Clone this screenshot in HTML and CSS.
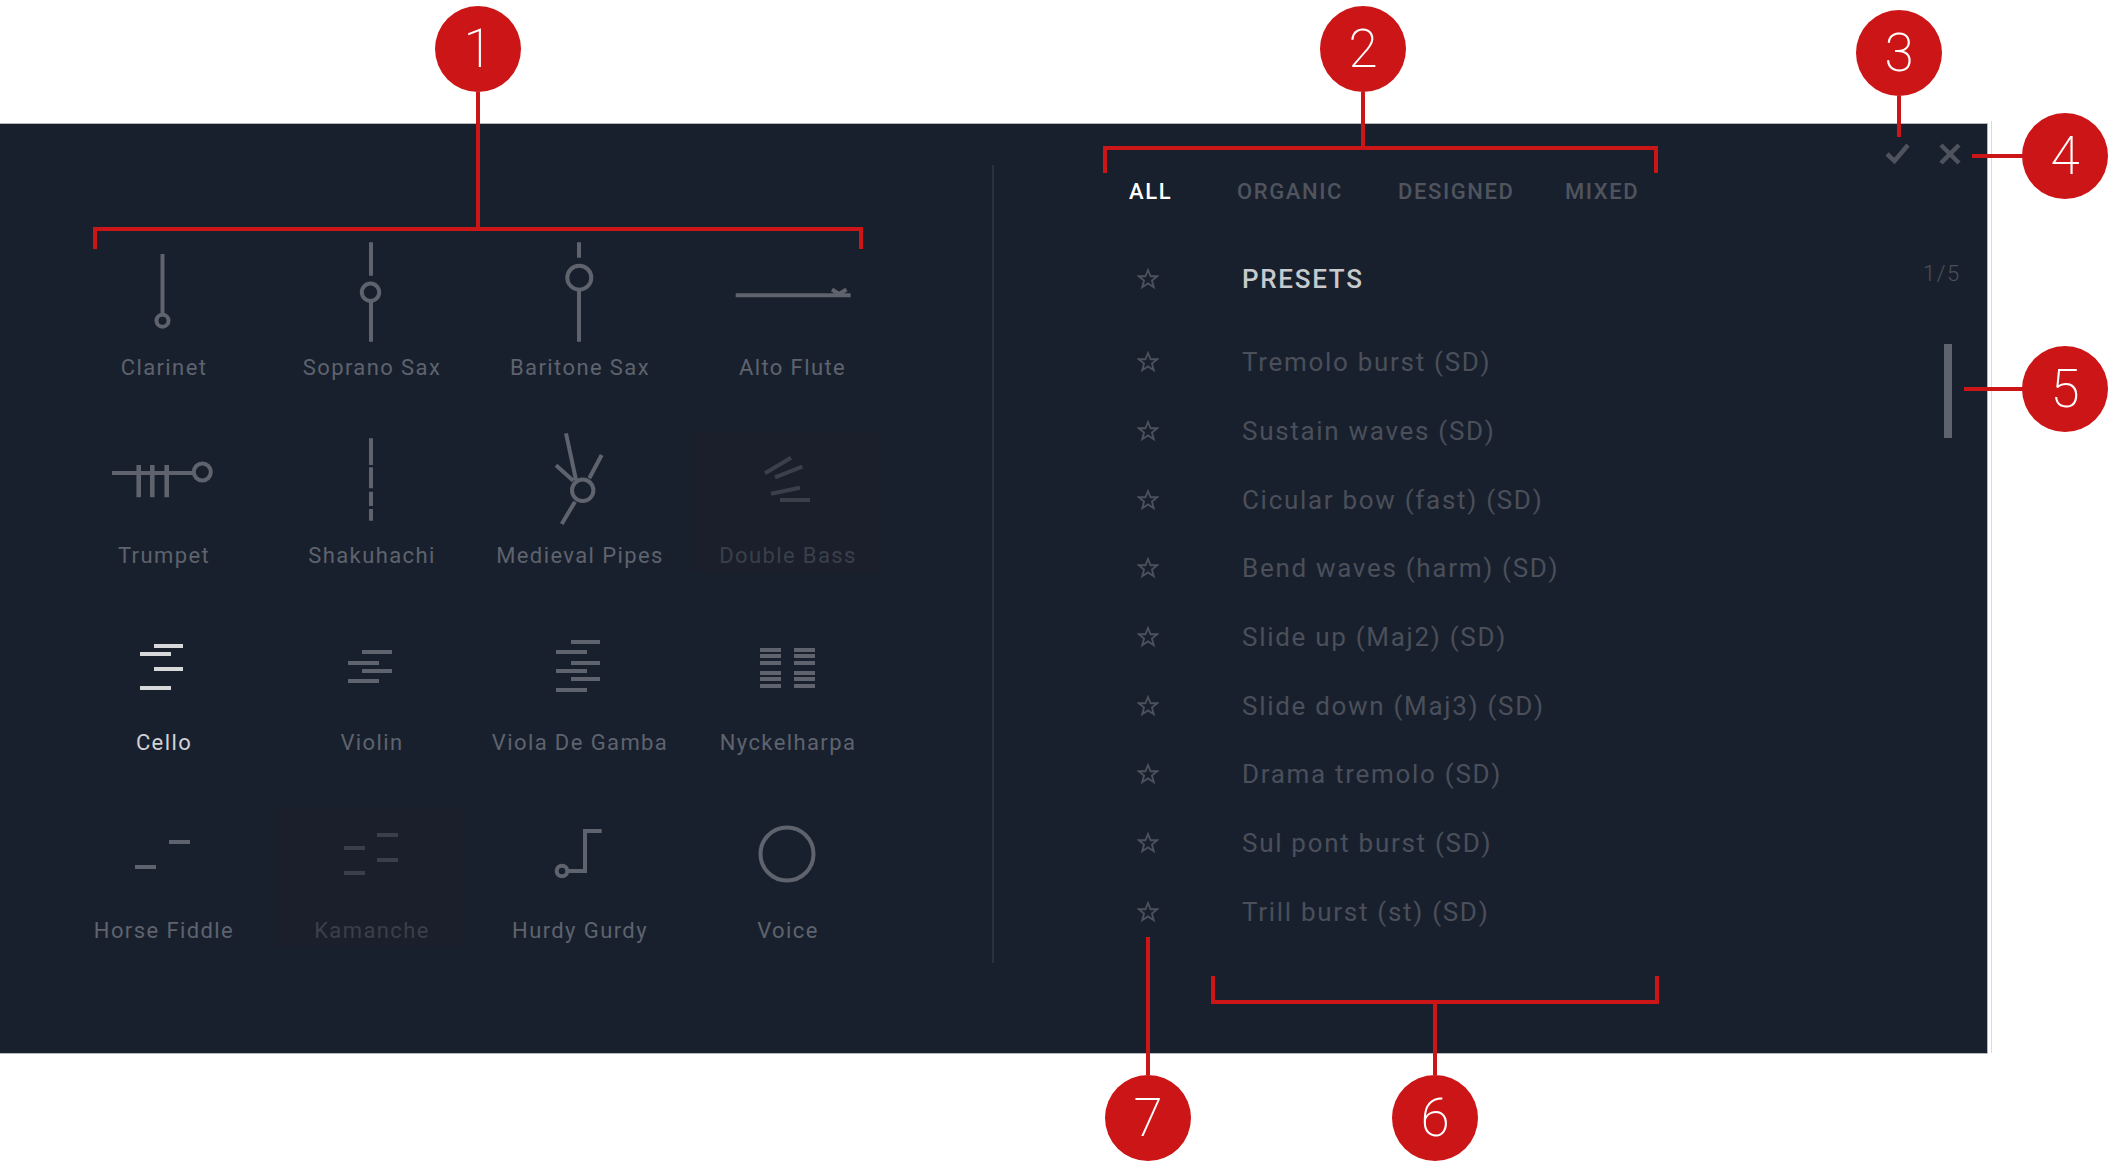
FILE: index.html
```html
<!DOCTYPE html>
<html lang="en">
<head>
<meta charset="utf-8">
<title>Instrument and preset browser</title>
<link rel="stylesheet" href="styles.css">
</head>
<body>
<main class="panel">
  <section class="instruments">
    <div class="cell">
      <svg class="icon" viewBox="0 0 208 120"><path d="M103.5 24V85"/><circle cx="103.5" cy="90.7" r="6"/></svg>
      <span class="label">Clarinet</span>
    </div>
    <div class="cell">
      <svg class="icon" viewBox="0 0 208 120"><path d="M104 12.3V45.7M104 72V111.7"/><circle cx="103.5" cy="62.3" r="8.7"/></svg>
      <span class="label">Soprano Sax</span>
    </div>
    <div class="cell">
      <svg class="icon" viewBox="0 0 208 120"><path d="M104 12.3V27.7M104 60V111.7"/><circle cx="104.3" cy="47.7" r="12"/></svg>
      <span class="label">Baritone Sax</span>
    </div>
    <div class="cell">
      <svg class="icon" viewBox="0 0 208 120"><path d="M52.7 65.3H167.7"/><path class="fine" d="M149 59.5L156 64L163.5 59.5"/></svg>
      <span class="label label-shift">Alto Flute</span>
    </div>

    <div class="cell">
      <svg class="icon" viewBox="0 0 208 120"><path d="M53 55H134"/><path class="thick" d="M79.7 47V79.3M93.3 47V79.3M107.7 47V79.3"/><circle cx="143.3" cy="54" r="8.5"/></svg>
      <span class="label">Trumpet</span>
    </div>
    <div class="cell">
      <svg class="icon" viewBox="0 0 208 120"><path d="M104 20.3V47M104 49.3V70.3M104 73.7V88M104 91V102.7"/></svg>
      <span class="label">Shakuhachi</span>
    </div>
    <div class="cell">
      <svg class="icon" viewBox="0 0 208 120"><path d="M91 15.3L101 62M81 47.3L98.3 62.7M126.7 37L114.3 60.3M100 83.7L86.7 106"/><circle cx="107.7" cy="72.3" r="10.7"/></svg>
      <span class="label">Medieval Pipes</span>
    </div>
    <div class="cell cell-off">
      <svg class="icon" viewBox="0 0 208 120"><path d="M82 55.3L108 39.7M92 59.3L119.3 48.7M88 75.7L117 69.7M97 82H127"/></svg>
      <span class="label">Double Bass</span>
    </div>

    <div class="cell cell-on">
      <svg class="icon" viewBox="0 0 208 120"><path d="M95 41H124M81 49H112M95 64H124M81 83H112"/></svg>
      <span class="label">Cello</span>
    </div>
    <div class="cell">
      <svg class="icon" viewBox="0 0 208 120"><path d="M95 47H125M81 58H112M95 66H125M81 76H112"/></svg>
      <span class="label">Violin</span>
    </div>
    <div class="cell">
      <svg class="icon" viewBox="0 0 208 120"><path d="M96 37H125M81 47H112M96 58H125M81 66H112M96 74H125M81 85H112"/></svg>
      <span class="label">Viola De Gamba</span>
    </div>
    <div class="cell">
      <svg class="icon" viewBox="0 0 208 120"><path d="M77 45H98M77 51H98M77 58H98M77 68H98M77 74H98M77 81H98M111 45H132M111 51H132M111 58H132M111 68H132M111 74H132M111 81H132"/></svg>
      <span class="label">Nyckelharpa</span>
    </div>

    <div class="cell">
      <svg class="icon" viewBox="0 0 208 120"><path d="M110 49H131M76 74H97"/></svg>
      <span class="label">Horse Fiddle</span>
    </div>
    <div class="cell cell-off">
      <svg class="icon" viewBox="0 0 208 120"><path d="M110 42H131M77 55H98M110 67H131M77 80H98"/></svg>
      <span class="label">Kamanche</span>
    </div>
    <div class="cell">
      <svg class="icon" viewBox="0 0 208 120"><path d="M92 78H110V38H126.7"/><circle cx="87" cy="78" r="5.3"/></svg>
      <span class="label">Hurdy Gurdy</span>
    </div>
    <div class="cell">
      <svg class="icon" viewBox="0 0 208 120"><circle cx="104" cy="61" r="26.5"/></svg>
      <span class="label">Voice</span>
    </div>
  </section>

  <div class="divider"></div>

  <section class="browser">
    <nav class="tabs">
      <span class="tab tab-on">ALL</span>
      <span class="tab">ORGANIC</span>
      <span class="tab">DESIGNED</span>
      <span class="tab">MIXED</span>
    </nav>
    <div class="row row-head">
      <svg class="star" viewBox="0 0 24 24"><path d="M12 2.2L14.8 9H22L16.3 13.6L18.3 21L12 16.8L5.7 21L7.7 13.6L2 9H9.2Z"/></svg>
      <span class="head-title">PRESETS</span>
      <span class="pager">1/5</span>
    </div>
    <ul class="list">
      <li class="row"><svg class="star" viewBox="0 0 24 24"><path d="M12 2.2L14.8 9H22L16.3 13.6L18.3 21L12 16.8L5.7 21L7.7 13.6L2 9H9.2Z"/></svg><span class="preset">Tremolo burst (SD)</span></li>
      <li class="row"><svg class="star" viewBox="0 0 24 24"><path d="M12 2.2L14.8 9H22L16.3 13.6L18.3 21L12 16.8L5.7 21L7.7 13.6L2 9H9.2Z"/></svg><span class="preset">Sustain waves (SD)</span></li>
      <li class="row"><svg class="star" viewBox="0 0 24 24"><path d="M12 2.2L14.8 9H22L16.3 13.6L18.3 21L12 16.8L5.7 21L7.7 13.6L2 9H9.2Z"/></svg><span class="preset">Cicular bow (fast) (SD)</span></li>
      <li class="row"><svg class="star" viewBox="0 0 24 24"><path d="M12 2.2L14.8 9H22L16.3 13.6L18.3 21L12 16.8L5.7 21L7.7 13.6L2 9H9.2Z"/></svg><span class="preset">Bend waves (harm) (SD)</span></li>
      <li class="row"><svg class="star" viewBox="0 0 24 24"><path d="M12 2.2L14.8 9H22L16.3 13.6L18.3 21L12 16.8L5.7 21L7.7 13.6L2 9H9.2Z"/></svg><span class="preset">Slide up (Maj2) (SD)</span></li>
      <li class="row"><svg class="star" viewBox="0 0 24 24"><path d="M12 2.2L14.8 9H22L16.3 13.6L18.3 21L12 16.8L5.7 21L7.7 13.6L2 9H9.2Z"/></svg><span class="preset">Slide down (Maj3) (SD)</span></li>
      <li class="row"><svg class="star" viewBox="0 0 24 24"><path d="M12 2.2L14.8 9H22L16.3 13.6L18.3 21L12 16.8L5.7 21L7.7 13.6L2 9H9.2Z"/></svg><span class="preset">Drama tremolo (SD)</span></li>
      <li class="row"><svg class="star" viewBox="0 0 24 24"><path d="M12 2.2L14.8 9H22L16.3 13.6L18.3 21L12 16.8L5.7 21L7.7 13.6L2 9H9.2Z"/></svg><span class="preset">Sul pont burst (SD)</span></li>
      <li class="row"><svg class="star" viewBox="0 0 24 24"><path d="M12 2.2L14.8 9H22L16.3 13.6L18.3 21L12 16.8L5.7 21L7.7 13.6L2 9H9.2Z"/></svg><span class="preset">Trill burst (st) (SD)</span></li>
    </ul>
    <div class="scrollbar"></div>
    <svg class="action action-ok" viewBox="0 0 28 24"><path d="M3 12L10.5 19L24 3"/></svg>
    <svg class="action action-close" viewBox="0 0 24 24"><path d="M3 3L21 21M21 3L3 21"/></svg>
  </section>
</main>
<div class="edge"></div>

<aside class="notes">
  <div class="badge b1">1</div><div class="lead l1"></div><div class="bracket br1"></div>
  <div class="badge b2">2</div><div class="lead l2"></div><div class="bracket br2"></div>
  <div class="badge b3">3</div><div class="lead l3"></div>
  <div class="badge b4">4</div><div class="lead l4"></div>
  <div class="badge b5">5</div><div class="lead l5"></div>
  <div class="badge b6">6</div><div class="lead l6"></div><div class="bracket br6"></div>
  <div class="badge b7">7</div><div class="lead l7"></div>
</aside>
</body>
</html>
```
FILE: styles.css
```css
* { box-sizing: border-box; }
html, body { margin: 0; padding: 0; background: #fff; }
body {
  position: relative;
  width: 2116px;
  height: 1165px;
  overflow: hidden;
  font-family: Roboto, "Liberation Sans", sans-serif;
  padding-top: 123px;
}

.panel {
  display: flex;
  width: 1988px;
  height: 931px;
  background: #19202d;
  border: solid #b4b7bd;
  border-width: 1px 1px 1px 0;
}

.instruments {
  display: grid;
  grid-template-columns: repeat(4, 208px);
  grid-template-rows: 188px 187px 188px 187px;
  width: 992px;
  padding: 106px 0 0 59px;
  align-content: start;
}
.cell { position: relative; display: flex; flex-direction: column; align-items: center; }
.cell-off::before {
  content: "";
  position: absolute;
  left: 9px;
  top: 15px;
  width: 187px;
  height: 140px;
  background: #1a1f2b;
}
.icon {
  position: relative;
  display: block;
  width: 208px;
  height: 120px;
  fill: none;
  stroke: #5e636d;
  stroke-width: 4;
}
.icon .thick { stroke-width: 4.6; }
.icon .fine { stroke-width: 4; }
.label {
  position: relative;
  display: block;
  height: 36px;
  margin-left: 2px;
  line-height: 36px;
  font-size: 22px;
  letter-spacing: 1.4px;
  color: #5e636d;
  white-space: nowrap;
}
.label-shift { margin-left: 11px; }
.cell-on .icon { stroke: #d6d8da; }
.cell-on .label { color: #d0d2d5; }
.cell-off .icon { stroke: #3a3f4a; }
.cell-off .label { color: #3a3f4a; }

.divider {
  width: 2px;
  height: 798px;
  margin-top: 41px;
  background: #2a303c;
}

.browser {
  position: relative;
  flex: 1;
}
.tabs {
  display: grid;
  grid-template-columns: 108px 161px 167px auto;
  justify-content: start;
  padding: 53px 0 0 135px;
  height: 86px;
  line-height: 30px;
}
.tab {
  font-size: 22px;
  font-weight: 500;
  letter-spacing: 1.6px;
  color: #4f545e;
}
.tab-on { color: #fff; }

.row {
  display: flex;
  align-items: center;
  height: 68.7px;
  padding-left: 143px;
}
.row-head {
  height: 68px;
  margin-top: 35px;
  margin-bottom: 15px;
}
.list { list-style: none; margin: 0; padding: 0; }
.star {
  flex: none;
  width: 22px;
  height: 22px;
  fill: none;
  stroke: #4c515c;
  stroke-width: 2;
  stroke-linejoin: miter;
}
.head-title {
  margin-left: 83px;
  font-size: 26px;
  font-weight: 500;
  letter-spacing: 1.7px;
  color: #c7cacd;
}
.pager {
  position: absolute;
  left: 929px;
  top: 136px;
  font-size: 22px;
  font-weight: 300;
  letter-spacing: 1.5px;
  line-height: 28px;
  color: #4a4f5a;
}
.preset {
  margin-left: 83px;
  font-size: 26px;
  letter-spacing: 1.7px;
  color: #4a4f5a;
  white-space: nowrap;
}
.scrollbar {
  position: absolute;
  left: 950px;
  top: 220px;
  width: 8px;
  height: 94px;
  background: #5e636d;
}
.action {
  position: absolute;
  fill: none;
  stroke: #4e535d;
  stroke-width: 4.5;
}
.action-ok { left: 890px; top: 18px; width: 28px; height: 24px; }
.action-close { left: 944px; top: 18px; width: 24px; height: 24px; }

.edge {
  position: absolute;
  left: 1991px;
  top: 121px;
  width: 1px;
  height: 932px;
  background: #dcdcdc;
}

/* annotation callouts */
.badge {
  position: absolute;
  width: 86px;
  height: 86px;
  border-radius: 50%;
  background: #cc1517;
  color: #fff;
  font-size: 53px;
  font-weight: 200;
  line-height: 86px;
  text-align: center;
}
.lead, .bracket { position: absolute; }
.lead { background: #cc1517; }
.bracket { border: 0 solid #cc1517; }

.b1 { left: 435px; top: 6px; }
.l1 { left: 476px; top: 92px; width: 4px; height: 135px; }
.br1 { left: 93px; top: 227px; width: 770px; height: 22px; border-width: 4px 4px 0 4px; }

.b2 { left: 1320px; top: 6px; }
.l2 { left: 1361px; top: 92px; width: 4px; height: 54px; }
.br2 { left: 1103px; top: 146px; width: 555px; height: 27px; border-width: 4px 4px 0 4px; }

.b3 { left: 1856px; top: 10px; }
.l3 { left: 1897px; top: 96px; width: 4px; height: 41px; }

.b4 { left: 2022px; top: 113px; }
.l4 { left: 1972px; top: 154px; width: 51px; height: 4px; }

.b5 { left: 2022px; top: 346px; }
.l5 { left: 1964px; top: 387px; width: 59px; height: 4px; }

.b6 { left: 1392px; top: 1075px; }
.l6 { left: 1433px; top: 1004px; width: 4px; height: 71px; }
.br6 { left: 1211px; top: 976px; width: 448px; height: 28px; border-width: 0 4px 4px 4px; }

.b7 { left: 1105px; top: 1075px; }
.l7 { left: 1146px; top: 937px; width: 4px; height: 138px; }
```
